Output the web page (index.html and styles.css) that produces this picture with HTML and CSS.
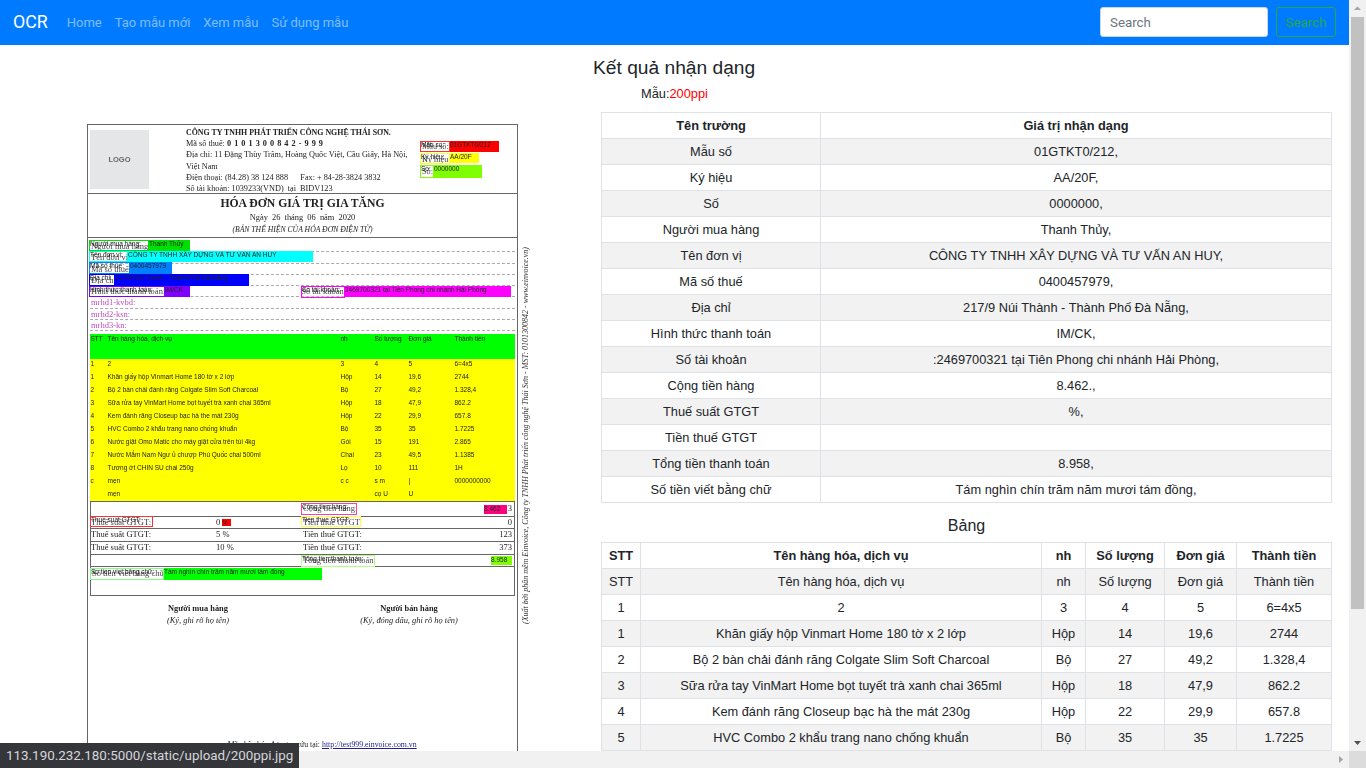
FILE: index.html
```html
<!DOCTYPE html>
<html lang="vi">
<head>
<meta charset="utf-8">
<title>OCR</title>
<link rel="stylesheet" href="styles.css">
</head>
<body>
<div class="window">
  <div class="page">
    <nav class="navbar">
      <a class="brand">OCR</a>
      <ul class="nav-links">
        <li>Home</li>
        <li>Tạo mẫu mới</li>
        <li>Xem mẫu</li>
        <li>Sử dụng mẫu</li>
      </ul>
      <form class="search">
        <input class="search-input" type="text" placeholder="Search">
        <button class="search-btn" type="button">Search</button>
      </form>
    </nav>
    <main class="content">
      <section class="scan-col">
        <div class="invoice">
          <div class="inv-head">
            <div class="logo">LOGO</div>
            <div class="seller">
              <b>CÔNG TY TNHH PHÁT TRIỂN CÔNG NGHỆ THÁI SƠN.</b>
              <span>Mã số thuế: <b class="spaced">0 1 0 1 3 0 0 8 4 2 - 9 9 9</b></span>
              <span>Địa chỉ: 11 Đặng Thùy Trâm, Hoàng Quốc Việt, Cầu Giấy, Hà Nội,</span>
              <span>Việt Nam</span>
              <span>Điện thoại: (84.28) 38 124 888 &nbsp; &nbsp; &nbsp;Fax: + 84-28-3824 3832</span>
              <span>Số tài khoản: 1039233(VND) &nbsp;tại &nbsp;BIDV123</span>
            </div>
            <div class="meta">
              <span>Mẫu số:</span>
              <span>Ký hiệu:</span>
              <span>Số:</span>
            </div>
          </div>
          <div class="inv-title">
            <h2>HÓA ĐƠN GIÁ TRỊ GIA TĂNG</h2>
            <p>Ngày &nbsp;26 &nbsp;tháng &nbsp;06 &nbsp;năm &nbsp;2020</p>
            <p class="em">(BẢN THỂ HIỆN CỦA HÓA ĐƠN ĐIỆN TỬ)</p>
          </div>
          <div class="buyer">
            <div class="line">Người mua hàng:</div>
            <div class="line">Tên đơn vị:</div>
            <div class="line">Mã số thuế:</div>
            <div class="line">Địa chỉ:</div>
            <div class="line two"><span>Hình thức thanh toán:</span><span class="second">Số tài khoản:</span></div>
            <div class="line pink">mrhd1-kvbd:</div>
            <div class="line pink">mrhd2-ksn:</div>
            <div class="line pink">mrhd3-kn:</div>
          </div>
          <div class="items">
            <div class="irow ihead"><span>STT</span><span>Tên hàng hóa, dịch vụ</span><span>nh</span><span>Số lượng</span><span>Đơn giá</span><span>Thành tiền</span></div>
            <div class="ybody">
              <div class="irow"><span>1</span><span>2</span><span>3</span><span>4</span><span>5</span><span>6=4x5</span></div>
              <div class="irow"><span>1</span><span>Khăn giấy hộp Vinmart Home 180 tờ x 2 lớp</span><span>Hộp</span><span>14</span><span>19,6</span><span>2744</span></div>
              <div class="irow"><span>2</span><span>Bộ 2 bàn chải đánh răng Colgate Slim Soft Charcoal</span><span>Bộ</span><span>27</span><span>49,2</span><span>1.328,4</span></div>
              <div class="irow"><span>3</span><span>Sữa rửa tay VinMart Home bọt tuyết trà xanh chai 365ml</span><span>Hộp</span><span>18</span><span>47,9</span><span>862.2</span></div>
              <div class="irow"><span>4</span><span>Kem đánh răng Closeup bạc hà the mát 230g</span><span>Hộp</span><span>22</span><span>29,9</span><span>657.8</span></div>
              <div class="irow"><span>5</span><span>HVC Combo 2 khẩu trang nano chống khuẩn</span><span>Bộ</span><span>35</span><span>35</span><span>1.7225</span></div>
              <div class="irow"><span>6</span><span>Nước giặt Omo Matic cho máy giặt cửa trên túi 4kg</span><span>Gói</span><span>15</span><span>191</span><span>2.865</span></div>
              <div class="irow"><span>7</span><span>Nước Mắm Nam Ngư ủ chượp Phú Quốc chai 500ml</span><span>Chai</span><span>23</span><span>49,5</span><span>1.1385</span></div>
              <div class="irow"><span>8</span><span>Tương ớt CHIN SU chai 250g</span><span>Lọ</span><span>10</span><span>111</span><span>1H</span></div>
              <div class="irow"><span>c</span><span>mẹn</span><span>c c</span><span>s m</span><span>|</span><span>0000000000</span></div>
              <div class="irow"><span></span><span>mẹn</span><span></span><span>cọ U</span><span>U</span><span></span></div>
            </div>
          </div>
          <div class="totals">
            <div class="trow"><span></span><span></span><span>Cộng tiền hàng:</span><span>3</span></div>
            <div class="trow"><span>Thuế suất GTGT:</span><span>0 %</span><span>Tiền thuế GTGT:</span><span>0</span></div>
            <div class="trow"><span>Thuế suất GTGT:</span><span>5 %</span><span>Tiền thuế GTGT:</span><span>123</span></div>
            <div class="trow"><span>Thuế suất GTGT:</span><span>10 %</span><span>Tiền thuế GTGT:</span><span>373</span></div>
            <div class="trow"><span></span><span></span><span>Tổng tiền thanh toán:</span><span></span></div>
            <div class="words">Số tiền viết bằng chữ:</div>
          </div>
          <div class="signs">
            <div><b>Người mua hàng</b><i>(Ký, ghi rõ họ tên)</i></div>
            <div><b>Người bán hàng</b><i>(Ký, đóng dấu, ghi rõ họ tên)</i></div>
          </div>
          <div class="lookup"><span class="lookup-text">Mã nhận hóa đơn: tra cứu tại:</span> <u>http://test999.einvoice.com.vn</u></div>

          <div class="mark lb" style="left:333px;top:16px;width:30px;height:11px;border-color:#ff3030"><span>Mẫu số:</span></div>
          <div class="mark fill" style="left:363px;top:16px;width:49px;height:11px;background:#ff0000">01GTKT0/212</div>
          <div class="mark lb" style="left:333px;top:28px;width:30px;height:11px;border-color:#ffff30"><span>Ký hiệu:</span></div>
          <div class="mark fill" style="left:363px;top:28px;width:29px;height:10px;background:#ffff00">AA/20F</div>
          <div class="mark lb" style="left:333px;top:40px;width:14px;height:13px;border-color:#80ff00"><span>Số:</span></div>
          <div class="mark fill" style="left:347px;top:40px;width:48px;height:13px;background:#80ff00">0000000</div>

          <div class="mark lb" style="left:2px;top:115px;width:60px;height:11px;border-color:#00e000"><span>Người mua hàng:</span></div>
          <div class="mark fill" style="left:62px;top:115px;width:41px;height:11px;background:#00e000">Thanh Thủy</div>
          <div class="mark lb" style="left:2px;top:126px;width:39px;height:11px;border-color:#00ffff"><span>Tên đơn vị:</span></div>
          <div class="mark fill" style="left:41px;top:126px;width:185px;height:11px;background:#00ffff">CÔNG TY TNHH XÂY DỰNG VÀ TƯ VẤN AN HUY</div>
          <div class="mark lb" style="left:2px;top:137px;width:41px;height:12px;border-color:#0080ff"><span>Mã số thuế:</span></div>
          <div class="mark fill" style="left:43px;top:137px;width:42px;height:12px;background:#0080ff">0400457979</div>
          <div class="mark lb" style="left:2px;top:149px;width:26px;height:12px;border-color:#0000ff"><span>Địa chỉ:</span></div>
          <div class="mark fill" style="left:28px;top:149px;width:134px;height:12px;background:#0000ff">217/9 Núi Thành - Thành Phố Đà Nẵng</div>
          <div class="mark lb" style="left:2px;top:161px;width:76px;height:11px;border-color:#8000ff"><span>Hình thức thanh toán:</span></div>
          <div class="mark fill" style="left:78px;top:161px;width:25px;height:11px;background:#8000ff">IM/CK</div>
          <div class="mark lb" style="left:214px;top:161px;width:44px;height:12px;border-color:#ff00ff"><span>Số tài khoản:</span></div>
          <div class="mark fill" style="left:258px;top:161px;width:166px;height:11px;background:#ff00ff">2469700321 tại Tiên Phong chi nhánh Hải Phòng</div>

          <div class="mark lb" style="left:214px;top:378px;width:56px;height:12px;border-color:#ff40a0"><span>Cộng tiền hàng:</span></div>
          <div class="mark fill" style="left:397px;top:380px;width:23px;height:9px;background:#ff0080">8.462.</div>
          <div class="mark lb" style="left:3px;top:391px;width:63px;height:11px;border-color:#ff3030"><span>Thuế suất GTGT:</span></div>
          <div class="mark fill" style="left:135px;top:394px;width:9px;height:7px;background:#ff0000">%</div>
          <div class="mark lb" style="left:214px;top:391px;width:60px;height:11px;border-color:#ffff40"><span>Tiền thuế GTGT:</span></div>
          <div class="mark lb" style="left:214px;top:430px;width:74px;height:12px;border-color:#b0ff80"><span>Tổng tiền thanh toán:</span></div>
          <div class="mark fill" style="left:404px;top:431px;width:21px;height:9px;background:#80ff00">8.958</div>
          <div class="mark lb" style="left:3px;top:443px;width:74px;height:12px;border-color:#80ff80"><span>Số tiền viết bằng chữ:</span></div>
          <div class="mark fill" style="left:77px;top:443px;width:158px;height:12px;background:#00ff00">Tám nghìn chín trăm năm mươi tám đồng</div>
        </div>
        <div class="sidenote">(Xuất bởi phần mềm Einvoice, Công ty TNHH Phát triển công nghệ Thái Sơn - MST: 0101300842 - www.einvoice.vn)</div>
      </section>
      <section class="result-col">
        <h3 class="result-title">Kết quả nhận dạng</h3>
        <p class="template">Mẫu:<span>200ppi</span></p>
        <table class="grid fields">
          <thead><tr><th>Tên trường</th><th>Giá trị nhận dạng</th></tr></thead>
          <tbody>
            <tr><td>Mẫu số</td><td>01GTKT0/212,</td></tr>
            <tr><td>Ký hiệu</td><td>AA/20F,</td></tr>
            <tr><td>Số</td><td>0000000,</td></tr>
            <tr><td>Người mua hàng</td><td>Thanh Thủy,</td></tr>
            <tr><td>Tên đơn vị</td><td>CÔNG TY TNHH XÂY DỰNG VÀ TƯ VẤN AN HUY,</td></tr>
            <tr><td>Mã số thuế</td><td>0400457979,</td></tr>
            <tr><td>Địa chỉ</td><td>217/9 Núi Thành - Thành Phố Đà Nẵng,</td></tr>
            <tr><td>Hình thức thanh toán</td><td>IM/CK,</td></tr>
            <tr><td>Số tài khoản</td><td>:2469700321 tại Tiên Phong chi nhánh Hải Phòng,</td></tr>
            <tr><td>Cộng tiền hàng</td><td>8.462.,</td></tr>
            <tr><td>Thuế suất GTGT</td><td>%,</td></tr>
            <tr><td>Tiền thuế GTGT</td><td></td></tr>
            <tr><td>Tổng tiền thanh toán</td><td>8.958,</td></tr>
            <tr><td>Số tiền viết bằng chữ</td><td>Tám nghìn chín trăm năm mươi tám đồng,</td></tr>
          </tbody>
        </table>
        <h4 class="table-title">Bảng</h4>
        <table class="grid goods">
          <thead><tr><th>STT</th><th>Tên hàng hóa, dịch vụ</th><th>nh</th><th>Số lượng</th><th>Đơn giá</th><th>Thành tiền</th></tr></thead>
          <tbody>
            <tr><td>STT</td><td>Tên hàng hóa, dịch vụ</td><td>nh</td><td>Số lượng</td><td>Đơn giá</td><td>Thành tiền</td></tr>
            <tr><td>1</td><td>2</td><td>3</td><td>4</td><td>5</td><td>6=4x5</td></tr>
            <tr><td>1</td><td>Khăn giấy hộp Vinmart Home 180 tờ x 2 lớp</td><td>Hộp</td><td>14</td><td>19,6</td><td>2744</td></tr>
            <tr><td>2</td><td>Bộ 2 bàn chải đánh răng Colgate Slim Soft Charcoal</td><td>Bộ</td><td>27</td><td>49,2</td><td>1.328,4</td></tr>
            <tr><td>3</td><td>Sữa rửa tay VinMart Home bọt tuyết trà xanh chai 365ml</td><td>Hộp</td><td>18</td><td>47,9</td><td>862.2</td></tr>
            <tr><td>4</td><td>Kem đánh răng Closeup bạc hà the mát 230g</td><td>Hộp</td><td>22</td><td>29,9</td><td>657.8</td></tr>
            <tr><td>5</td><td>HVC Combo 2 khẩu trang nano chống khuẩn</td><td>Bộ</td><td>35</td><td>35</td><td>1.7225</td></tr>
          </tbody>
        </table>
      </section>
    </main>
  </div>
  <div class="vbar">
    <svg class="arrow" viewBox="0 0 17 17" width="17" height="17"><path d="M5 10h7L8.500 6.500z" fill="#a3a3a3"/></svg>
    <div class="vthumb"></div>
    <div class="vgap"></div>
    <svg class="arrow" viewBox="0 0 17 17" width="17" height="17"><path d="M5 7h7l-3.500 4z" fill="#505050"/></svg>
  </div>
  <div class="hbar">
    <svg class="arrow" viewBox="0 0 17 17" width="17" height="17"><path d="M7 5v7l4-3.500z" fill="#a3a3a3"/></svg>
  </div>
  <div class="corner"></div>
  <div class="status">113.190.232.180:5000/static/upload/200ppi.jpg</div>
</div>
</body>
</html>
```
FILE: styles.css
```css
* { box-sizing: border-box; }
html, body { margin: 0; padding: 0; background: #fff; overflow: hidden; height: 775px; }
body { font-family: "Liberation Sans", Arial, sans-serif; color: #212529; }

.window {
  position: relative;
  width: 1366px;
  height: 768px;
  display: grid;
  grid-template-columns: 1349px 17px;
  grid-template-rows: 751px 17px;
  overflow: hidden;
}
.page { overflow: hidden; }

/* navbar */
.navbar {
  height: 45px;
  background: #007bff;
  display: flex;
  align-items: center;
  padding: 0 13px 1px;
  font-family: Roboto, sans-serif;
}
.brand { color: #fff; font-size: 17.800px; margin-right: 19px; line-height: 24px; }
.nav-links { list-style: none; margin: 0; padding: 0; display: flex; gap: 13px; font-size: 13px; color: rgba(255,255,255,.5); }
.search { margin-left: auto; display: flex; gap: 8px; }
.search-input {
  width: 168px; height: 30px;
  border: 1px solid #ced4da; border-radius: 3px;
  padding: 0 9px; font: 13.300px Roboto, sans-serif; color: #495057; background: #fff;
}
.search-input::placeholder { color: #6c757d; opacity: 1; }
.search-btn {
  width: 60px; height: 30px; padding: 0;
  border: 1px solid #28a745; border-radius: 3px; background: transparent;
  color: #28a745; font: 13.300px Roboto, sans-serif;
}

/* main layout */
.content { display: flex; height: 706px; overflow: hidden; }
.scan-col { width: 593px; flex: none; padding: 79px 0 0 87px; position: relative; display: flex; align-items: flex-start; }
.result-col { width: 739px; flex: none; }
.result-title { font-size: 19.200px; font-weight: 400; line-height: 24px; margin: 11px 0 0; color: #212529; }
.template { margin: 4px 0 0 48px; font-size: 12.800px; line-height: 20px; height: 28px; }
.template span { color: #ff0000; }

.grid { margin-left: 8px; width: 731px; border-collapse: collapse; table-layout: fixed; font-size: 12.800px; }
.grid th, .grid td { border: 1px solid #dee2e6; height: 26px; padding: 0 2px; text-align: center; line-height: 20px; font-weight: 400; }
.grid th { font-weight: 700; }
.grid tbody tr:nth-child(odd) { background: #f2f2f2; }
.fields th:first-child { width: 219px; }
.goods th:nth-child(1) { width: 39px; }
.goods th:nth-child(2) { width: 401px; }
.goods th:nth-child(3) { width: 44px; }
.goods th:nth-child(4) { width: 79px; }
.goods th:nth-child(5) { width: 72px; }
.table-title { margin: 13px 0 7px 8px; width: 731px; text-align: center; font-size: 16px; font-weight: 400; line-height: 19px; }

/* scrollbars */
.vbar { background: #f1f1f1; display: flex; flex-direction: column; }
.vthumb { height: 592px; background: #c1c1c1; margin: 0 2px; }
.vgap { flex: 1; }
.arrow { display: block; flex: none; }
.hbar { background: #f1f1f1; display: flex; justify-content: flex-end; }
.corner { background: #dcdcdc; }
.status {
  position: absolute; left: 0; bottom: 0;
  height: 25px; padding: 0 6px;
  background: #35363a; color: #d5d7da; font: 13.400px/26px Roboto, sans-serif;
}

/* scanned invoice */
.invoice {
  position: relative;
  width: 431px; height: 700px; flex: none;
  border: 1px solid #666;
  font-family: "Liberation Serif", serif;
  font-size: 8.500px; color: #222;
  filter: blur(.45px);
}
.inv-head { height: 69px; border-bottom: 1px solid #666; display: flex; }
.logo { width: 59px; height: 59px; margin: 5px 0 0 2px; background: #e5e6e8; color: #666; font: 700 7.500px/59px "Liberation Sans", sans-serif; text-align: center; }
.seller { margin: 2px 0 0 37px; width: 234px; flex: none; display: flex; flex-direction: column; line-height: 11.200px; font-size: 8.240px; }
.seller > b { font-size: 7.900px; }
.spaced { letter-spacing: .5px; }
.meta { display: flex; flex-direction: column; margin: 16px 0 0; padding-left: 2px; line-height: 12.500px; font-size: 8.240px; }
.inv-title { height: 44px; border-bottom: 1px solid #666; text-align: center; }
.inv-title h2 { margin: 0 0 1px; padding-top: 2px; font-size: 11.700px; line-height: 15px; }
.inv-title p { margin: 0; font-size: 8.400px; line-height: 12px; }
.inv-title .em { font-style: italic; font-size: 7.660px; }
.buyer { padding: 3px 2px 0; height: 96px; }
.line { height: 11.300px; line-height: 11px; border-bottom: 1px dashed #aaa; white-space: nowrap; padding-left: 1px; }
.two { display: flex; }
.second { margin-left: 136px; }
.pink { color: #c04fc0; }

.items { margin: 0 2px; width: 425px; font: 6.500px "Liberation Sans", sans-serif; color: #222; }
.irow { display: grid; grid-template-columns: 17px 233px 34px 34px 46px 61px; height: 13px; line-height: 9px; white-space: nowrap; padding-left: .5px; }
.ihead { height: 25px; background: #00ff00; }
.ybody { background: #ffff00; height: 142px; }
.totals { margin: 0 2px; width: 425px; border: 1px solid #666; height: 95px; }
.trow { display: grid; grid-template-columns: 125px 87px 1fr 30px; height: 13px; line-height: 11px; padding: 0 2px 0 0; border-bottom: 1px solid #666; }
.trow span:last-child { text-align: right; }
.trow:nth-child(1) { height: 15px; line-height: 13px; }
.trow:nth-child(2), .trow:nth-child(5) { height: 12px; }
.words { padding: 1px; line-height: 11px; }
.signs { display: flex; margin-top: 7px; padding-left: 4.500px; text-align: center; }
.signs div { display: flex; flex-direction: column; flex: none; width: 211px; line-height: 12px; font-size: 8.400px; }
.lookup { margin: 113px 0 0 100px; font-size: 7.800px; line-height: 10px; white-space: nowrap; display: flex; gap: 0; }
.lookup-text { width: 134px; flex: none; text-align: right; padding-right: 2px; }
.lookup u { color: #22228c; }

.mark { position: absolute; margin-left: -1px; white-space: nowrap; overflow: hidden; }
.mark.lb { border: 1px solid; background: rgba(255,255,255,.15); font: 6.500px/6px "Liberation Sans", sans-serif; color: #111; }
.mark.fill { font: 6.500px/8px "Liberation Sans", sans-serif; color: #222; }

.sidenote {
  writing-mode: vertical-rl;
  transform: rotate(180deg);
  position: absolute; left: 521px; top: 199px;
  width: 10px; height: 380px;
  font: italic 8px/10px "Liberation Serif", serif; color: #333;
  white-space: nowrap; filter: blur(.35px);
}
```
